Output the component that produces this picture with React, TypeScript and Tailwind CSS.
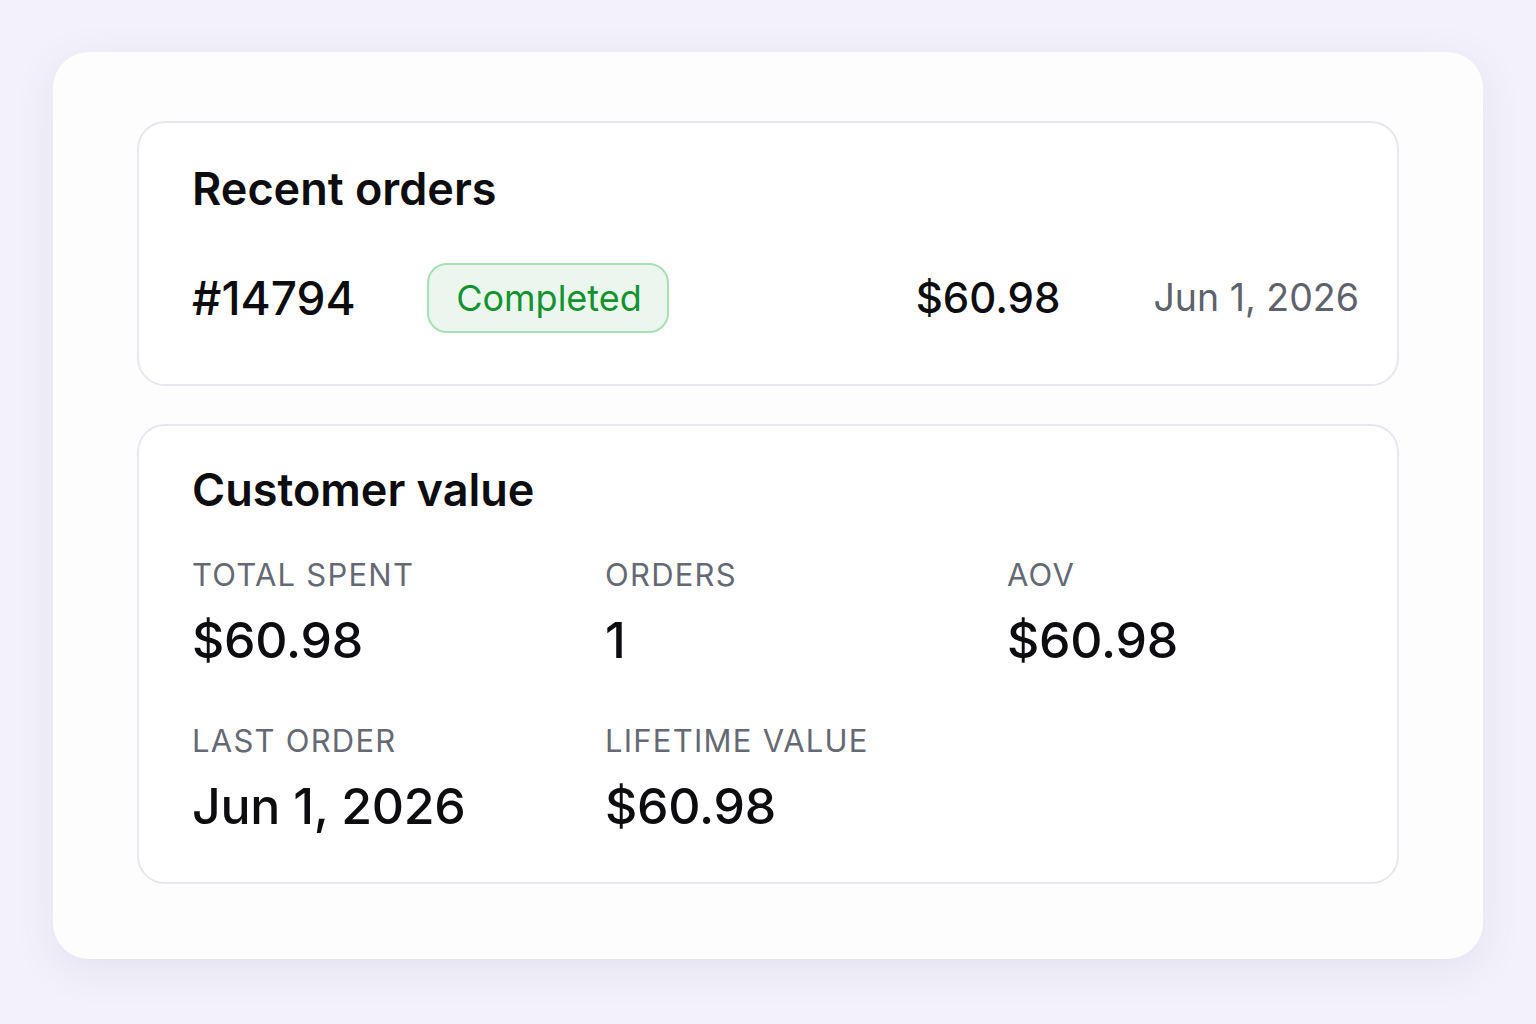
const stats = [
  { label: "TOTAL SPENT", value: "$60.98" },
  { label: "ORDERS", value: "1" },
  { label: "AOV", value: "$60.98" },
  { label: "LAST ORDER", value: "Jun 1, 2026" },
  { label: "LIFETIME VALUE", value: "$60.98" },
];

function Panel({ children, className = "" }: { children: React.ReactNode; className?: string }) {
  return (
    <section
      className={`rounded-[28px] border-2 border-[#e7e7ee] bg-white ${className}`}
    >
      {children}
    </section>
  );
}

export default function App() {
  return (
    <div
      className="min-h-screen bg-[#f3f2fa] px-[53px] pt-[52px] text-[#0d0d0f]"
      style={{ fontFamily: "Inter, 'Noto Sans', sans-serif" }}
    >
      <div className="flex flex-col gap-[38px] rounded-[36px] bg-[#fdfdfe] px-[84px] pt-[69px] pb-[75px] shadow-[0_10px_40px_rgba(90,80,160,0.10)]">
        <Panel className="pl-[53px] pr-[38px] pt-[39px] pb-[51px]">
          <h2 className="text-[45px] font-semibold leading-[1.2]">Recent orders</h2>
          <div className="mt-[47px] flex items-center">
            <span className="w-[235px] text-[46px] font-medium leading-none">#14794</span>
            <span className="flex h-[70px] w-[242px] items-center justify-center rounded-[20px] border-2 border-[#a9dfb4] bg-[#ebf7ee] pl-[2px] text-[36px] leading-none text-[#14922e]">
              Completed
            </span>
            <span className="ml-auto text-[42px] font-medium leading-none">$60.98</span>
            <span className="ml-[93px] text-[37.5px] leading-none text-[#5d626c]">
              Jun 1, 2026
            </span>
          </div>
        </Panel>

        <Panel className="pl-[53px] pr-[40px] pt-[37px] pb-[46px]">
          <h2 className="text-[45px] font-semibold leading-[1.2]">Customer value</h2>
          <div className="mt-[39px] grid grid-cols-[413px_402px_1fr] gap-y-[52px]">
            {stats.map((s) => (
              <div key={s.label} className="flex flex-col">
                <span className="text-[31px] leading-[1.2] tracking-[0.04em] text-[#646973]">
                  {s.label}
                </span>
                <span className="mt-[17px] text-[50px] font-medium leading-[1.2] tracking-[-0.005em]">
                  {s.value}
                </span>
              </div>
            ))}
          </div>
        </Panel>
      </div>
    </div>
  );
}
